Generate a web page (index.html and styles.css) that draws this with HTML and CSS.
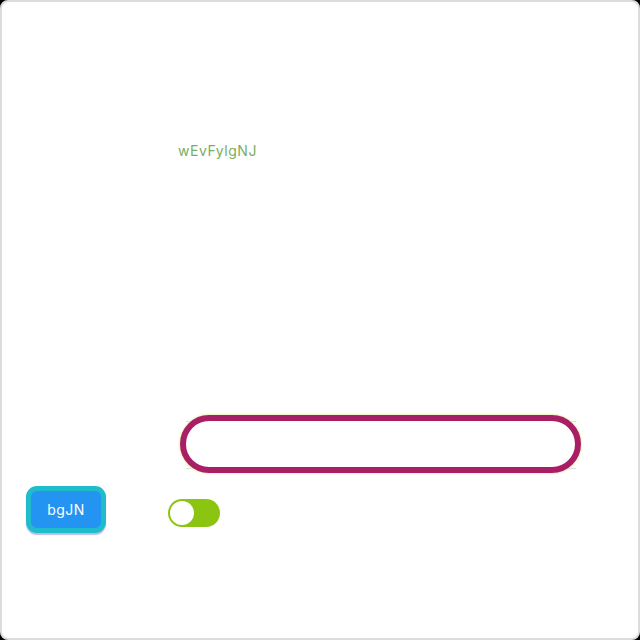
FILE: index.html
```html
<!DOCTYPE html>
<html>
<head>
<meta charset="utf-8">
<link rel="stylesheet" href="styles.css">
</head>
<body>
<div class="frame">
  <div class="label">wEvFylgNJ</div>
  <div class="field"><input class="pill-input" type="text"></div>
  <div class="row">
    <button class="btn">bgJN</button>
    <div class="toggle"><span class="knob"></span></div>
  </div>
</div>
</body>
</html>
```
FILE: styles.css
```css
html, body {
  margin: 0;
  padding: 0;
  background: #000;
}
.frame {
  width: 640px;
  height: 640px;
  box-sizing: border-box;
  border: 2px solid #dcdcdc;
  border-radius: 8px;
  background: #fff;
  display: flex;
  flex-direction: column;
  font-family: Inter, "Open Sans", sans-serif;
}
.label {
  margin: 140px 0 0 176px;
  color: #79ae62;
  font-size: 14px;
  line-height: 18px;
  letter-spacing: 0.55px;
}
.field {
  position: relative;
  margin: 261px 0 0 184px;
  width: 390px;
  height: 46px;
  border-top: 1px solid #dedede;
  border-bottom: 1px solid #dedede;
}
.pill-input {
  position: absolute;
  left: -6px;
  top: -7px;
  width: 401px;
  height: 58px;
  box-sizing: border-box;
  border: 6px solid #a91f66;
  border-radius: 29px;
  background: #fff;
  box-shadow: 0 0 2px 1px #eef0b8;
  outline: none;
  margin: 0;
  padding: 0 16px;
}
.row {
  display: flex;
  align-items: flex-start;
  margin: 17px 0 0 24px;
}
.btn {
  width: 80px;
  height: 47px;
  box-sizing: border-box;
  border: 5px solid #1fbccb;
  border-radius: 11px;
  background: #2394f2;
  color: #fff;
  font-family: Inter, "Open Sans", sans-serif;
  font-size: 14px;
  letter-spacing: 0.5px;
  padding: 0;
  box-shadow: 0 2px 1px #b6bde6;
}
.toggle {
  margin: 13px 0 0 62px;
  width: 52px;
  height: 28px;
  border-radius: 14px;
  background: #8bc512;
  display: flex;
  align-items: center;
  padding: 0 2px;
  box-sizing: border-box;
}
.knob {
  width: 24px;
  height: 24px;
  border-radius: 50%;
  background: #fff;
}
```
